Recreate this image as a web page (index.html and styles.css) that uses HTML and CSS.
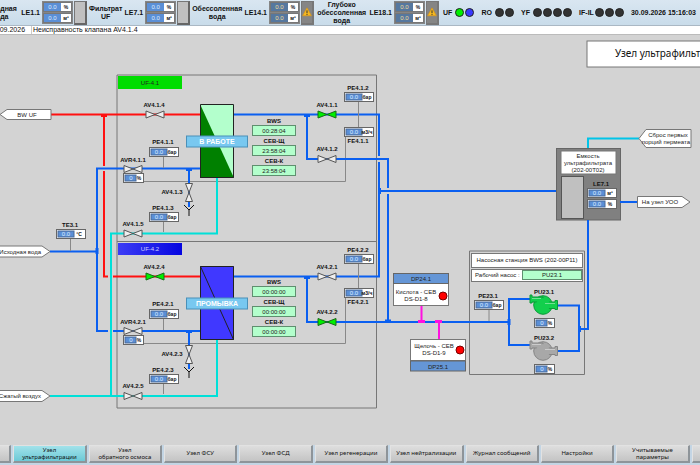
FILE: index.html
```html
<!DOCTYPE html>
<html lang="ru">
<head>
<meta charset="utf-8">
<title>Узел ультрафильтрации</title>
<link rel="stylesheet" href="styles.css">
</head>
<body>
<header class="topbar">
  <div class="level level-source">
    <span class="level-name">Исходная<br>вода</span><span class="level-tag">LE1.1</span>
    <div class="readings"><p><b>0.0</b><i>%</i></p><p><b>0.0</b><i>м³</i></p></div>
    <span class="tank"></span>
  </div>
  <div class="level level-filtrate">
    <span class="level-name">Фильтрат<br>UF</span><span class="level-tag">LE7.1</span>
    <div class="readings"><p><b>0.0</b><i>%</i></p><p><b>0.0</b><i>м³</i></p></div>
    <span class="tank"></span>
  </div>
  <div class="level level-demi">
    <span class="level-name">Обессоленная<br>вода</span><span class="level-tag">LE14.1</span>
    <div class="readings fault"><p><b>0.0</b><i>%</i></p><p><b>0.0</b><i>м³</i></p></div>
    <span class="tank tank-fault"><svg class="warning" viewBox="0 0 12 12"><path d="M6 1 11.300 10.500H.7Z" fill="#f5b921" stroke="#d9951a" stroke-width=".8" stroke-linejoin="round"/><path d="M6 4v3.500M6 8.500v1.200" stroke="#333" stroke-width="1.200"/></svg></span>
  </div>
  <div class="level level-deep">
    <span class="level-name">Глубоко<br>обессоленная<br>вода</span><span class="level-tag">LE18.1</span>
    <div class="readings fault"><p><b>0.0</b><i>%</i></p><p><b>0.0</b><i>м³</i></p></div>
    <span class="tank tank-fault"><svg class="warning" viewBox="0 0 12 12"><path d="M6 1 11.300 10.500H.7Z" fill="#f5b921" stroke="#d9951a" stroke-width=".8" stroke-linejoin="round"/><path d="M6 4v3.500M6 8.500v1.200" stroke="#333" stroke-width="1.200"/></svg></span>
  </div>
  <div class="states">
    <div class="state"><span>UF</span><span class="lamps"><i class="lamp on"></i><i class="lamp wash"></i></span></div>
    <div class="state"><span>RO</span><span class="lamps"><i class="lamp"></i><i class="lamp"></i></span></div>
    <div class="state"><span>YF</span><span class="lamps"><i class="lamp"></i><i class="lamp"></i><i class="lamp"></i><i class="lamp"></i></span></div>
    <div class="state state-tight"><span>IF-IL</span><span class="lamps"><i class="lamp"></i><i class="lamp"></i><i class="lamp"></i></span></div>
    <time>30.09.2026 15:16:03</time>
  </div>
</header>
<div class="alarm"><span class="alarm-date">30.09.2026</span><span class="alarm-text">Неисправность клапана AV4.1.4</span></div>

<main class="mimic">
<svg class="scheme" viewBox="0 35 700 410">
  <defs>
    <path id="valve" d="M-9-3.500V3.500L9-3.500V3.500Z"/>
    <path id="drain" d="M0 5V11M-5 0 0 5 5 0"/>
    <g id="meter"><rect class="meter-body" x=".5" y=".5" width="29" height="9"/><rect class="meter-value" x="2" y="2" width="16" height="6"/></g>
    <g id="meter-small"><rect class="meter-body" x=".5" y=".5" width="20" height="9"/><rect class="meter-value" x="2" y="2" width="11" height="6"/></g>
    <g id="pump">
      <circle r="9.300"/>
      <path d="M-13-10H-11V-8H0V-3H-11V-2H-13Z"/>
      <path d="M0-3H12V-4.500H14.500V4.500H12V3.500H0Z"/>
      <circle class="pump-eye" r="7"/>
      <path class="pump-shine" d="M-11-6.500H-2M2-1.500H12"/>
    </g>
    <linearGradient id="wash-head"><stop offset="0" stop-color="#3d3df5"/><stop offset="1" stop-color="#0505e0"/></linearGradient>
  </defs>

  <!-- title -->
  <rect class="white" x="587" y="41" width="160" height="26"/>
  <text class="title" x="615" y="57">Узел ультрафильтрации</text>

  <!-- unit frames -->
  <path class="frame" d="M117 75H376.500V408H117ZM117 241.500H376.500"/>
  <path class="thin" d="M144 181.500H345.500V136M144 343.500H345.500V298"/>
  <rect x="118" y="76" width="64" height="13" fill="#0d0"/>
  <rect x="118" y="243" width="64" height="12" fill="url(#wash-head)"/>
  <text class="mid" x="150" y="85">UF-4.1</text>
  <text class="mid light" x="150" y="251">UF-4.2</text>

  <!-- pump station and buffer tank -->
  <path class="frame" d="M469.500 251H584.500V374.500H469.500Z"/>
  <rect class="tank-body" x="556.500" y="148.500" width="64" height="71.500"/>
  <rect class="white" x="561" y="151" width="55" height="23"/>
  <rect class="tank-level" x="561.500" y="176.500" width="22" height="42"/>

  <!-- pipes -->
  <path class="pipe red" d="M51 114.500H200M104 114.500V166M104 171V276.500H108M113 276.500H200"/>
  <path class="pipe air" d="M50 396H217V340M111 396V233.500H217V178"/>
  <path class="pipe blue" d="M50 251.500H97M200 168.500H97V331H108M113 331H200M189 168.500V207M189 331V369"/>
  <path class="pipe blue" d="M234 114.500H379V156M379 162V276.500H234M307 114.500V159H388V188M388 194V322M379 191H556M307 276.500V322H509"/>
  <path class="pipe blue" d="M530 299H509V345H532M558 305.500H579V351H558M579 329H588V220M620 202H637"/>
  <path class="pipe cyan" d="M588 148V138.500H639"/>
  <path class="pipe dose" d="M421.500 306V321M439 321V339"/>
  <path class="joint red" d="M101 115.500H107"/>
  <path class="joint blue" d="M304 115.500H310M304 277.500H310M186 169.500H192M186 331.500H192M385 321H391M379.500 188V194M97 248V254M509 319V325M579.500 326V332"/>
  <path class="joint dose" d="M418 321.500H425M435 321.500H442"/>
  <path class="thin" d="M163.500 156V168M163.500 221V232M163.500 318V330M163.500 383V394M358.500 102V127M358.500 264V289M70.500 239V251M489 310V321"/>

  <!-- valves -->
  <g class="valve">
    <use href="#valve" x="155" y="114.500"/><use href="#valve" x="133" y="169"/><use href="#valve" x="133" y="233.500"/>
    <use href="#valve" x="327" y="159"/><use href="#valve" x="327" y="276.500"/>
    <use href="#valve" x="133" y="331"/><use href="#valve" x="133" y="396"/>
    <use href="#valve" transform="translate(189 192.500) rotate(90)"/><use href="#valve" transform="translate(189 354.500) rotate(90)"/>
  </g>
  <g class="valve open">
    <use href="#valve" x="327" y="114.500"/><use href="#valve" x="327" y="322"/><use href="#valve" x="155" y="276.500"/>
  </g>
  <g class="drain"><use href="#drain" x="189" y="205"/><use href="#drain" x="189" y="367"/></g>

  <!-- filters -->
  <rect x="200" y="104" width="34" height="74" fill="#b3ffcc"/><path d="M200 104 234 178H200Z" fill="#008000"/>
  <path class="outline" d="M200.500 104.500H233.500V177.500H200.500Z"/>
  <rect x="200" y="266" width="34" height="74" fill="#4038ff"/>
  <path class="outline" d="M200.500 266.500H233.500V339.500H200.500ZL233.500 339.500"/>
  <rect class="mode" x="186.500" y="136" width="61" height="11"/><text class="mode-text" x="217" y="144">В РАБОТЕ</text>
  <rect class="mode" x="186.500" y="298" width="61" height="11"/><text class="mode-text" x="217" y="306">ПРОМЫВКА</text>

  <!-- tags -->
  <g class="tag">
    <text x="154" y="107">AV4.1.4</text><text x="163" y="144">PE4.1.1</text><text x="133" y="162">AVR4.1.1</text>
    <text x="172" y="194">AV4.1.3</text><text x="163" y="210">PE4.1.3</text><text x="133" y="226">AV4.1.5</text>
    <text x="274" y="123">BWS</text><text x="274" y="143">СЕВ-Щ</text><text x="274" y="163">СЕВ-К</text>
    <text x="327" y="107">AV4.1.1</text><text x="327" y="151">AV4.1.2</text><text x="358" y="90">PE4.1.2</text><text x="358" y="143">FE4.1.1</text>
    <text x="154" y="269">AV4.2.4</text><text x="163" y="306">PE4.2.1</text><text x="133" y="324">AVR4.2.1</text>
    <text x="172" y="356">AV4.2.3</text><text x="163" y="372">PE4.2.3</text><text x="133" y="388">AV4.2.5</text>
    <text x="274" y="284">BWS</text><text x="274" y="304">СЕВ-Щ</text><text x="274" y="324">СЕВ-К</text>
    <text x="327" y="269">AV4.2.1</text><text x="327" y="314">AV4.2.2</text><text x="358" y="252">PE4.2.2</text><text x="358" y="304">FE4.2.1</text>
    <text x="70" y="227">TE3.1</text><text x="488" y="298">PE23.1</text><text x="544" y="294">PU23.1</text><text x="544" y="340">PU23.2</text><text x="601" y="186">LE7.1</text>
  </g>

  <!-- timers -->
  <g class="timer">
    <rect x="252.500" y="125.500" width="43" height="10"/><rect x="252.500" y="145.500" width="43" height="10"/><rect x="252.500" y="165.500" width="43" height="10"/>
    <rect x="252.500" y="286.500" width="43" height="10"/><rect x="252.500" y="306.500" width="43" height="10"/><rect x="252.500" y="326.500" width="43" height="10"/>
    <text x="274" y="133">00:28:04</text><text x="274" y="153">23:58:04</text><text x="274" y="173">23:58:04</text>
    <text x="274" y="294">00:00:00</text><text x="274" y="314">00:00:00</text><text x="274" y="334">00:00:00</text>
  </g>

  <!-- meters -->
  <g class="meter">
    <g transform="translate(149 147)"><use href="#meter"/><text x="10" y="7">0.0</text><text class="unit" x="23" y="7">бар</text></g>
    <g transform="translate(149 212)"><use href="#meter"/><text x="10" y="7">0.0</text><text class="unit" x="23" y="7">бар</text></g>
    <g transform="translate(149 309)"><use href="#meter"/><text x="10" y="7">0.0</text><text class="unit" x="23" y="7">бар</text></g>
    <g transform="translate(149 374)"><use href="#meter"/><text x="10" y="7">0.0</text><text class="unit" x="23" y="7">бар</text></g>
    <g transform="translate(344 92)"><use href="#meter"/><text x="10" y="7">0.0</text><text class="unit" x="23" y="7">бар</text></g>
    <g transform="translate(344 127)"><use href="#meter"/><text x="10" y="7">0.0</text><text class="unit" x="23" y="7">м3/ч</text></g>
    <g transform="translate(344 254)"><use href="#meter"/><text x="10" y="7">0.0</text><text class="unit" x="23" y="7">бар</text></g>
    <g transform="translate(344 288)"><use href="#meter"/><text x="10" y="7">0.0</text><text class="unit" x="23" y="7">м3/ч</text></g>
    <g transform="translate(56 229)"><use href="#meter"/><text x="10" y="7">0.0</text><text class="unit" x="23" y="7">°C</text></g>
    <g transform="translate(474 300)"><use href="#meter"/><text x="10" y="7">0.0</text><text class="unit" x="23" y="7">бар</text></g>
    <g transform="translate(587 188)"><use href="#meter"/><text x="10" y="7">0.0</text><text class="unit" x="23" y="7">м³</text></g>
    <g transform="translate(587 199)"><use href="#meter"/><text x="10" y="7">0.0</text><text class="unit" x="23" y="7">%</text></g>
    <g transform="translate(123 173)"><use href="#meter-small"/><text x="8" y="7">0</text><text class="unit" x="16" y="7">%</text></g>
    <g transform="translate(123 335)"><use href="#meter-small"/><text x="8" y="7">0</text><text class="unit" x="16" y="7">%</text></g>
    <g transform="translate(534 318)"><use href="#meter-small"/><text x="8" y="7">0</text><text class="unit" x="16" y="7">%</text></g>
    <g transform="translate(534 364)"><use href="#meter-small"/><text x="8" y="7">0</text><text class="unit" x="16" y="7">%</text></g>
  </g>

  <!-- flow arrows -->
  <path class="white" d="M0 114.500 7 109.500H51V119.500H7Z"/><text class="mid" x="27" y="117">BW UF</text>
  <path class="white" d="M-8 246H42L50 251.500 42 257H-8Z"/><text class="end" x="41" y="254">Исходная вода</text>
  <path class="white" d="M-8 390.500H42L50 396 42 401.500H-8Z"/><text class="end" x="41" y="398">Сжатый воздух</text>
  <path class="white" d="M639 138.500 646 129.500H691V147.500H646Z"/>
  <text class="mid" x="668" y="137">Сброс первых</text><text class="end" x="690" y="144">порций пермеата</text>
  <path class="white" d="M637.500 196.500H682L690 202 682 207.500H637.500Z"/><text class="mid" x="660" y="204">На узел УОО</text>

  <!-- tank caption -->
  <text class="mid" x="588" y="158">Емкость</text><text class="mid" x="588" y="165">ультрафильтрата</text><text class="mid" x="588" y="172">(202-00T02)</text>

  <!-- dosing units -->
  <rect class="white" x="393.500" y="283.500" width="55" height="22"/><rect class="dose-head" x="393.500" y="273.500" width="55" height="10"/>
  <text class="mid" x="421" y="281">DP24.1</text><text class="mid" x="416" y="294">Кислота - СЕВ</text><text class="mid" x="416" y="301">DS-D1-8</text>
  <circle class="stop" cx="443" cy="296" r="4"/>
  <rect class="white" x="410.500" y="339.500" width="55" height="21"/><rect class="dose-head" x="410.500" y="361" width="55" height="10"/>
  <text class="mid" x="438" y="369">DP25.1</text><text class="mid" x="434" y="348">Щелочь - СЕВ</text><text class="mid" x="434" y="355">DS-D1-9</text>
  <circle class="stop" cx="460" cy="350" r="4"/>

  <!-- pump station -->
  <rect class="white" x="471.500" y="253.500" width="111" height="14"/><text class="mid" x="527" y="262">Насосная станция BWS (202-00P11)</text>
  <rect class="white" x="471.500" y="269.500" width="111" height="12"/><text x="475" y="277">Рабочий насос :</text>
  <g class="timer"><rect x="522.500" y="270.500" width="59" height="9"/><text x="552" y="277">PU23.1</text></g>
  <use class="pump run" href="#pump" x="543" y="305"/><use class="pump" href="#pump" x="543" y="351"/>
</svg>
</main>

<nav class="menu">
  <button type="button" aria-label="Назад"></button>
  <button type="button" class="active">Узел<br>ультрафильтрации</button>
  <button type="button">Узел<br>обратного осмоса</button>
  <button type="button">Узел ФСУ</button>
  <button type="button">Узел ФСД</button>
  <button type="button">Узел регенерации</button>
  <button type="button">Узел нейтрализации</button>
  <button type="button">Журнал сообщений</button>
  <button type="button">Настройки</button>
  <button type="button">Учитываемые<br>параметры</button>
  <button type="button" aria-label="Далее"></button>
</nav>
</body>
</html>
```
FILE: styles.css
```css
* { box-sizing: border-box; }
body { margin: 0; min-height: 100vh; display: flex; flex-direction: column; overflow-x: hidden; background: #d3d3d3; color: #111; font-family: "Liberation Sans", Arial, sans-serif; font-size: 7px; line-height: 8px; }
p { margin: 0; }

.topbar { display: flex; align-items: center; height: 26px; padding-right: 4px; overflow: hidden; background: linear-gradient(#d9e6f1, #c9dcea); border-bottom: 1px solid #aab8c4; font-weight: bold; }
.level { display: flex; align-items: center; flex: none; gap: 1px; }
.level-source { width: 108px; margin-left: -19px; }
.level-filtrate { width: 103px; }
.level-demi { width: 124px; }
.level-deep { width: 125px; }
.level-name { flex: 1; text-align: center; }
.level-tag { padding: 0 1px; }
.readings { width: 31px; padding: 1px; display: grid; gap: 1px; background: #858585; }
.readings p { display: flex; height: 10px; border: 1px solid #777; background: #fff; font-size: 6px; }
.readings b { width: 17px; background: #5b8fd6; color: #dcecff; font-weight: normal; text-align: center; }
.readings i { flex: 1; font-style: normal; font-size: 5px; text-align: center; }
.fault b { background: #56789f; color: #f1df9a; }
.tank { width: 13px; height: 24px; margin-right: 2px; border: 1px solid #777; border-right: 2px solid #666; border-bottom: 2px solid #666; background: #c0c0c0; }
.tank-fault { display: flex; align-items: center; background: #858585; border-color: #777; }
.warning { flex: none; width: 10px; height: 12px; }
.states { flex: 1; display: flex; align-items: center; justify-content: space-between; padding-left: 2px; }
.state { display: flex; align-items: center; gap: 3px; }
.state-tight { gap: 1px; }
.lamps { display: flex; gap: 1px; }
.lamp { width: 9px; height: 9px; border: 1px solid #222; border-radius: 50%; background: #333; }
.lamp.on { background: #00f000; }
.lamp.wash { background: #3838ff; }

.alarm { display: flex; height: 9px; margin-left: -10px; background: #fff; border-bottom: 1px solid #bbb; }
.alarm-date { width: 42px; padding-right: 6px; text-align: right; border-right: 1px solid #ccc; }
.alarm-text { padding-left: 1px; }

.mimic { flex: 1; }
.scheme { display: block; width: 100%; height: auto; font-size: 6px; }
.scheme text { fill: #222; }
.scheme .title { font-family: "Noto Sans", sans-serif; font-size: 10px; fill: #111; }
.scheme .mid { text-anchor: middle; }
.scheme .end { text-anchor: end; }
.scheme .light { fill: #cfd0ff; }
.frame, .thin, .outline, .pipe, .joint, .drain { fill: none; }
.frame { stroke: #777; stroke-width: 1px; }
.thin { stroke: #888; stroke-width: 1px; }
.outline { stroke: #222; stroke-width: 1px; }
.pipe { stroke-width: 2px; }
.joint { stroke-width: 3px; }
.red { stroke: #ff1010; }
.blue { stroke: #0a5ff0; }
.air { stroke: #00e0d8; }
.cyan { stroke: #00c4e8; }
.dose { stroke: #ff10e0; }
.white { fill: #fff; stroke: #777; stroke-width: 1px; }
.valve { fill: #eee; stroke: #555; stroke-width: 1px; }
.open { fill: #00f000; stroke: #176b17; }
.drain { stroke: #111; stroke-width: 1px; }
.mode { fill: #78c8f0; stroke: #4a90b8; }
.scheme .mode-text { fill: #fff; font-size: 7px; font-weight: bold; text-anchor: middle; }
.tag { font-weight: bold; text-anchor: middle; }
.scheme .tag text { fill: #111; }
.timer { text-anchor: middle; }
.timer rect { fill: #b3ffcc; stroke: #5f8f6f; }
.meter { text-anchor: middle; }
.meter-body { fill: #fff; stroke: #666; }
.meter-value { fill: #5b8fd6; stroke: #4a6a98; }
.scheme .meter text { fill: #dcecff; }
.scheme .meter .unit { fill: #111; font-size: 5px; font-weight: bold; }
.tank-body { fill: #808080; stroke: #666; }
.tank-level { fill: #c0c0c0; stroke: #555; }
.dose-head { fill: #6596d6; stroke: #666; }
.stop { fill: #f00; stroke: #700; }
.pump { fill: #a8a8a8; stroke: #858585; }
.pump.run { fill: #12cf4c; stroke: #0a9a38; }
.pump-eye { stroke: none; }
.pump-shine { fill: none; stroke: #fff; stroke-opacity: .4; }

.menu { display: grid; grid-template-columns: repeat(11, 1fr); gap: 2px; height: 20px; margin: 0 -65px 0 -62px; padding-bottom: 2px; background: #c3d5e4; }
.menu button { padding: 0; border: 1px solid #e2e2e2; border-right: 2px solid #8e9499; border-bottom: 2px solid #8e9499; background: linear-gradient(#dedede, #c4c4c4); color: #111; font-family: "Noto Sans", sans-serif; font-size: 6px; line-height: 7px; }
.menu .active { background: linear-gradient(#a2e2ea, #6cc9d6); }
```
